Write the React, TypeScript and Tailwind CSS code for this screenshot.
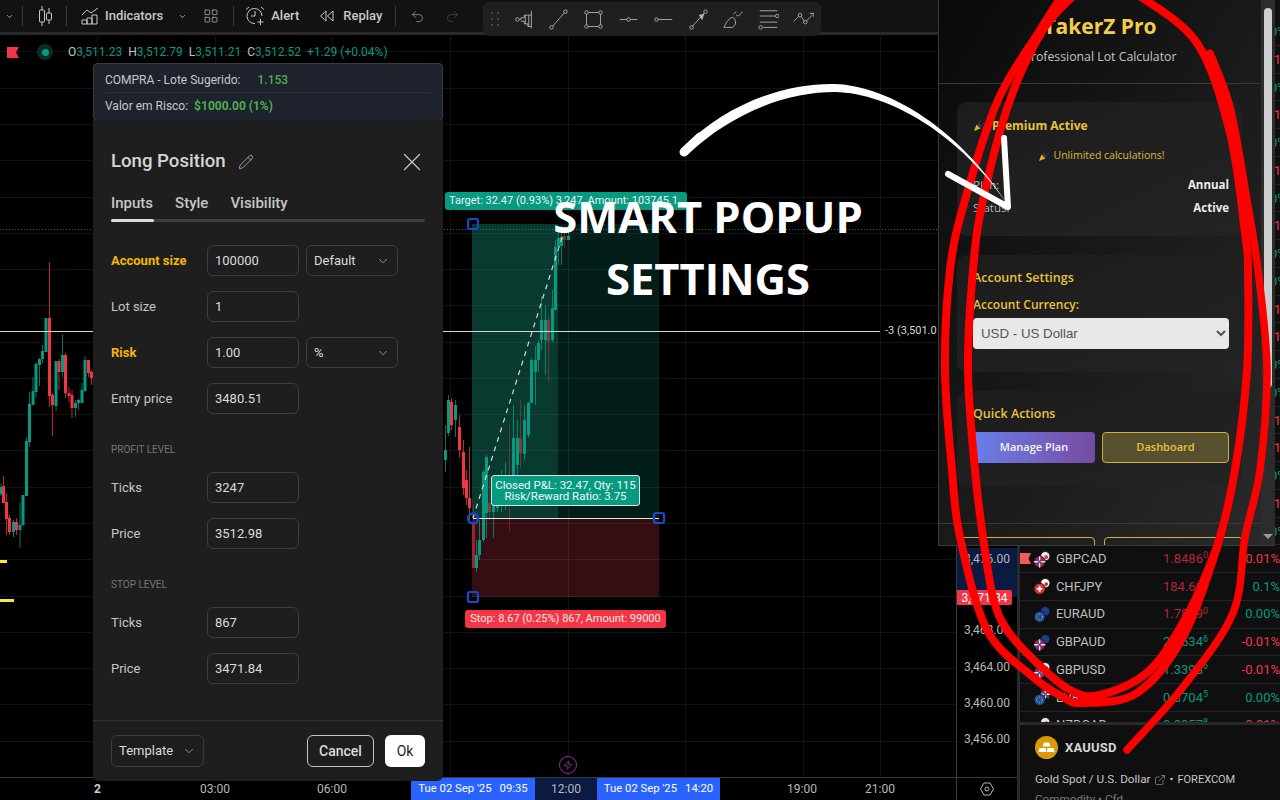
import React from 'react';
import { ChevronDown, Pencil, X, Undo2, Redo2, LayoutGrid, ExternalLink, Zap } from 'lucide-react';

// [x, wickTop, bodyTop, bodyBottom, wickBottom, up?]
type Candle = [number, number, number, number, number, number];
const candles: Candle[] = [
  [0.5, 484, 487, 494, 496, 1], [3, 476, 486, 503, 503, 0], [6, 493, 502, 519, 535, 0], [9, 515, 518, 532, 535, 0],
  [13, 520, 522, 532, 537, 1], [16, 518, 522, 530, 535, 0], [19.5, 503, 525, 530, 548, 1], [22.5, 495, 495, 525, 526, 1],
  [26, 437, 441, 496, 496, 1], [29, 392, 404, 442, 447, 1], [32.5, 377, 391, 405, 405, 1], [35.5, 362, 364, 392, 398, 1],
  [39, 358, 359, 365, 386, 1], [42, 345, 351, 359, 363, 1], [45.5, 318, 318, 352, 352, 1], [49, 262, 318, 396, 407, 0],
  [52, 393, 395, 405, 436, 0], [55.5, 361, 361, 406, 411, 1], [58.5, 359, 361, 372, 390, 0], [62, 334, 355, 372, 377, 1],
  [65, 353, 355, 393, 398, 0], [68.5, 387, 393, 396, 402, 0], [71.5, 390, 395, 408, 418, 0], [75, 400, 403, 408, 417, 1],
  [78, 399, 400, 403, 410, 1], [81.5, 383, 390, 403, 403, 1], [84.5, 356, 360, 391, 392, 1], [88, 360, 360, 373, 377, 0],
  [91, 370, 372, 378, 385, 0],
  [445, 425, 450, 460, 472, 1], [448, 395, 400, 433, 436, 1], [451, 398, 402, 425, 430, 0], [455, 400, 405, 420, 437, 1],
  [459, 415, 427, 450, 458, 0], [463, 440, 452, 488, 495, 0], [466, 470, 480, 498, 505, 0], [469, 447, 498, 508, 520, 0],
  [473, 505, 523, 568, 568, 0], [476, 540, 555, 568, 572, 1], [479, 520, 540, 555, 560, 1], [483, 470, 472, 540, 542, 1],
  [486, 455, 457, 513, 538, 1], [489, 475, 503, 512, 520, 0], [493, 485, 490, 512, 538, 1], [497, 478, 482, 508, 512, 1],
  [501, 470, 480, 505, 512, 1], [505, 462, 478, 505, 510, 1], [509, 425, 478, 500, 531, 0], [513, 405, 438, 478, 490, 1],
  [517, 420, 438, 465, 475, 1], [520, 400, 438, 453, 468, 0], [524, 405, 420, 454, 460, 1], [528, 402, 403, 435, 438, 1],
  [531, 358, 360, 403, 403, 1], [535, 346, 360, 372, 405, 1], [538, 340, 343, 360, 372, 1], [541, 296, 320, 340, 351, 1],
  [545, 305, 320, 340, 375, 1], [548, 315, 320, 341, 381, 0], [552, 290, 308, 340, 342, 1], [555, 240, 247, 310, 310, 1],
  [558, 228, 238, 247, 265, 1], [561, 226, 237, 246, 265, 1], [564, 226, 236, 240, 248, 0], [568, 224, 236, 240, 240, 1],
];

const gridY = [51, 88, 124, 160, 197, 233, 269, 305, 342, 378, 414, 450, 487, 523, 559, 596, 632, 668, 704, 741];
const gridX = [97, 215, 332, 450, 568, 685, 803, 880];

const inkRed = '#f23645';
const inkGreen = '#089981';

// smooth line through the points, for the hand drawn marks
function smooth(pts: number[][]) {
  let d = `M${pts[0][0]},${pts[0][1]}`;
  for (let i = 0; i < pts.length - 1; i++) {
    const p0 = pts[i - 1] || pts[i];
    const p1 = pts[i];
    const p2 = pts[i + 1];
    const p3 = pts[i + 2] || p2;
    const c1x = p1[0] + (p2[0] - p0[0]) / 6;
    const c1y = p1[1] + (p2[1] - p0[1]) / 6;
    const c2x = p2[0] - (p3[0] - p1[0]) / 6;
    const c2y = p2[1] - (p3[1] - p1[1]) / 6;
    d += ` C${c1x},${c1y} ${c2x},${c2y} ${p2[0]},${p2[1]}`;
  }
  return d;
}

const loopOuter = [[1063, -6], [1040, 30], [998, 100], [965, 200], [950, 270], [945, 370], [952, 470], [960, 537], [987, 630], [1033, 677], [1063, 697], [1083, 703], [1137, 693], [1183, 637], [1217, 547], [1235, 470], [1247, 370], [1248, 270], [1245, 233], [1230, 133], [1197, 43], [1137, -6]];
const loopInner = [[1075, -6], [1043, 30], [1010, 100], [983, 200], [973, 270], [968, 370], [975, 470], [983, 537], [993, 597], [1007, 630], [1037, 663], [1070, 690], [1100, 695], [1150, 670], [1190, 610], [1217, 547]];
const loopTail = [[1210, 53], [1230, 107], [1247, 200], [1258, 270], [1267, 370], [1260, 470], [1245, 537], [1233, 613], [1183, 687], [1127, 750]];

const ChartCanvas = () => (
  <svg className="absolute left-0 top-0" width="956" height="777" viewBox="0 0 956 777">
    <rect x="472" y="224" width="86" height="294" fill="#083a30" />
    <rect x="558" y="224" width="101" height="294" fill="#031d18" />
    <rect x="472" y="518" width="187" height="79" fill="#340e12" />
    {gridY.map((y) => <line key={y} x1="0" x2="956" y1={y + 0.5} y2={y + 0.5} stroke="#ffffff" strokeOpacity="0.07" />)}
    {gridX.map((x) => <line key={x} y1="36" y2="777" x1={x + 0.5} x2={x + 0.5} stroke="#ffffff" strokeOpacity="0.07" />)}
    <line x1="0" x2="938" y1="229.5" y2="229.5" stroke="#089981" strokeDasharray="1 2" opacity="0.8" />
    {candles.map(([x, wt, bt, bb, wb, up], i) => {
      const color = up ? inkGreen : inkRed;
      const faded = x > 472 && !up ? 0.55 : 1;
      return (
        <g key={i} opacity={faded}>
          <rect x={x} y={wt} width="1" height={wb - wt} fill={color} opacity="0.75" />
          <rect x={x - 1} y={bt} width="3" height={bb - bt} fill={color} />
        </g>
      );
    })}
    <rect x="0" y="560" width="7" height="3" fill="#f5e642" />
    <rect x="0" y="599" width="14" height="3" fill="#f5e642" />
    <line x1="0" x2="880" y1="331.5" y2="331.5" stroke="#d6d6d6" />
    <line x1="473" y1="518" x2="566" y2="225" stroke="#d8d8d8" strokeWidth="1.2" strokeDasharray="5 5" />
    <line x1="473" x2="659" y1="518.5" y2="518.5" stroke="#e8e8e8" />
    <rect x="468" y="219" width="10" height="10" rx="2" fill="none" stroke="#1848cc" strokeWidth="2.2" />
    <rect x="468" y="592" width="10" height="10" rx="2" fill="none" stroke="#1848cc" strokeWidth="2.2" />
    <rect x="654" y="513" width="10" height="10" rx="2" fill="none" stroke="#1848cc" strokeWidth="2.2" />
    <circle cx="473" cy="518.5" r="5" fill="none" stroke="#1848cc" strokeWidth="2.4" />
  </svg>
);

const CandleIcon = () => (
  <svg width="18" height="22" viewBox="0 0 18 22" fill="none" stroke="#c8c8c8" strokeWidth="1">
    <path d="M6 1v4M6 17v4M13 3v5M13 15v4" />
    <rect x="3.5" y="5" width="5" height="12" rx="1" />
    <rect x="10.5" y="8" width="5" height="7" rx="1" />
  </svg>
);

const IndicatorsIcon = () => (
  <svg width="18" height="18" viewBox="0 0 18 18" fill="none" stroke="#c8c8c8" strokeWidth="1">
    <path d="M1 8 6 3l4 3 7-5M1 17v-4h5v4M6 17v-6h5v6M11 17V8h5v9M1 17h15" />
  </svg>
);

const AlertIcon = () => (
  <svg width="20" height="20" viewBox="0 0 20 20" fill="none" stroke="#c8c8c8" strokeWidth="1">
    <path d="M17 10a7.5 7.5 0 1 0-7 7.5M10 5v5H6M1 3.5 4 1M19 3.5 16 1M15.5 13v6M12.5 16h6" />
  </svg>
);

const ReplayIcon = () => (
  <svg width="16" height="12" viewBox="0 0 16 12" fill="none" stroke="#c8c8c8" strokeWidth="1">
    <path d="M7 1 1.5 6 7 11zM14 1 8.5 6 14 11z" />
  </svg>
);

const Dot = ({ x, y }: { x: number; y: number }) => <circle cx={x} cy={y} r="2" fill="#1f1f1f" stroke="#b4b4b4" />;

// floating drawing toolbar icons, each one 24x24
const toolIcons = [
  <g key="volume" fill="none" stroke="#b4b4b4"><path d="M21 2v20M7 12h2V10h4V7h8M9 14h4v3h4v3h4M14 7v10M18 7v13" /><Dot x={5} y={12} /></g>,
  <g key="trend" fill="none" stroke="#b4b4b4"><path d="M5 20 19 4" /><Dot x={4} y={21} /><Dot x={20} y={3} /></g>,
  <g key="rect" fill="none" stroke="#b4b4b4"><path d="M4 4h16v16H4z" /><Dot x={4} y={4} /><Dot x={20} y={4} /><Dot x={4} y={20} /><Dot x={20} y={20} /></g>,
  <g key="hline" fill="none" stroke="#b4b4b4"><path d="M2 12h20" /><Dot x={12} y={12} /></g>,
  <g key="ray" fill="none" stroke="#b4b4b4"><path d="M4 12h18" /><Dot x={4} y={12} /></g>,
  <g key="arrow" fill="none" stroke="#b4b4b4"><path d="M5 20 19 4" /><path d="M13 7l5-1-2 6z" fill="#b4b4b4" /><Dot x={4} y={21} /><Dot x={20} y={3} /></g>,
  <g key="brush" fill="none" stroke="#b4b4b4"><path d="M1 21h10c4-3 4-7 2-10-1-2-3-2-5 0-3 2-5 6-7 10zM15 7c2 2 5 0 7-4M12 6l3-3" /></g>,
  <g key="fib" fill="none" stroke="#b4b4b4"><path d="M2 2h20M2 8h18M2 15h20M6 21h16" /><Dot x={22} y={8} /><Dot x={3} y={21} /></g>,
  <g key="path" fill="none" stroke="#b4b4b4"><path d="M1 14 8 7l6 8 9-9M19 5h5v5" /><Dot x={8} y={7} /><Dot x={14} y={15} /></g>,
];

const TopBar = () => (
  <div className="flex h-[32px] items-center bg-[#121212] text-[13px] font-medium text-[#c8c8c8]">
    <ChevronDown className="ml-[5px] h-[9px] w-[9px]" strokeWidth={2} />
    <div className="ml-[8px] h-[20px] w-px bg-[#3a3a3a]" />
    <div className="ml-[13px]"><CandleIcon /></div>
    <div className="ml-[12px] h-[20px] w-px bg-[#3a3a3a]" />
    <div className="ml-[14px]"><IndicatorsIcon /></div>
    <span className="ml-[6px]">Indicators</span>
    <ChevronDown className="ml-[15px] h-[9px] w-[9px]" strokeWidth={2} />
    <LayoutGrid className="ml-[16px] h-[16px] w-[16px]" strokeWidth={1} />
    <div className="ml-[14px] h-[20px] w-px bg-[#3a3a3a]" />
    <div className="ml-[11px]"><AlertIcon /></div>
    <span className="ml-[6px]">Alert</span>
    <div className="ml-[20px]"><ReplayIcon /></div>
    <span className="ml-[8px]">Replay</span>
    <div className="ml-[13px] h-[20px] w-px bg-[#3a3a3a]" />
    <Undo2 className="ml-[14px] h-[15px] w-[15px] text-[#9a9a9a]" strokeWidth={1.2} />
    <Redo2 className="ml-[20px] h-[15px] w-[15px] text-[#4a4a4a]" strokeWidth={1.2} />
  </div>
);

const DrawingBar = () => (
  <div className="absolute left-[483px] top-[2px] flex h-[34px] w-[338px] items-center rounded-md bg-[#1f1f1f] pl-[8px]">
    <div className="mr-[14px] grid grid-cols-2 gap-x-[4px] gap-y-[4px]">
      {[0, 1, 2, 3, 4, 5].map((i) => <span key={i} className="h-[2px] w-[2px] rounded-full bg-[#555]" />)}
    </div>
    <div className="flex gap-[14px]">
      {toolIcons.map((icon, i) => (
        <svg key={i} width="21" height="21" viewBox="0 0 24 24">{icon}</svg>
      ))}
    </div>
  </div>
);

const LegendValue = ({ k, v }: { k: string; v: string }) => (
  <span className="mr-[6px]"><span className="text-[#c4c4c4]">{k}</span><span className="text-[#089981]">{v}</span></span>
);

const Legend = () => (
  <div className="absolute left-0 top-[42px] flex h-[20px] items-center text-[12px]">
    <svg className="ml-[7px]" width="12" height="11" viewBox="0 0 12 11"><path d="M0 0h12l-3 5.5 3 5.5H0z" fill={inkRed} /></svg>
    <span className="ml-[18px] flex h-[16px] w-[16px] items-center justify-center rounded-full bg-[#0e2b26]">
      <span className="h-[7px] w-[7px] rounded-full bg-[#089981]" />
    </span>
    <span className="ml-[15px] flex">
      <LegendValue k="O" v="3,511.23" />
      <LegendValue k="H" v="3,512.79" />
      <LegendValue k="L" v="3,511.21" />
      <LegendValue k="C" v="3,512.52" />
      <span className="text-[#089981]">+1.29 (+0.04%)</span>
    </span>
  </div>
);

const inputBox = 'flex h-[31px] items-center rounded-md border border-[#3d3d3d] px-[7px] text-[13px] text-[#dbdbdb]';

const InputRow = ({ label, value, unit, accent }: { label: string; value: string; unit?: string; accent?: boolean }) => (
  <div className="flex items-center">
    <span className={`w-[96px] text-[13px] ${accent ? 'font-bold text-[#f5b800]' : 'text-[#c6c6c6]'}`}>{label}</span>
    <div className={`${inputBox} w-[92px]`}>{value}</div>
    {unit && (
      <div className={`${inputBox} ml-[7px] w-[92px] justify-between`}>
        {unit}
        <ChevronDown className="h-[14px] w-[14px] text-[#a0a0a0]" strokeWidth={1.5} />
      </div>
    )}
  </div>
);

const SettingsDialog = () => (
  <div className="absolute left-[93px] top-[120px] flex h-[661px] w-[350px] flex-col rounded-b-md bg-[#1e1e1e] font-['Roboto',sans-serif]">
    <div className="mt-[30px] flex h-[24px] items-center justify-between pl-[18px] pr-[16px]">
      <div className="flex items-center">
        <span className="text-[18.6px] font-medium text-[#d6d6d6]">Long Position</span>
        <Pencil className="ml-[12px] h-[16px] w-[16px] text-[#bdbdbd]" strokeWidth={1.2} />
      </div>
      <X className="h-[30px] w-[30px] text-[#c4c4c4]" strokeWidth={1} />
    </div>
    <div className="mt-[20px] flex h-[18px] items-center gap-[22px] pl-[18px] text-[15px] font-medium text-[#c6c6c6]">
      <span>Inputs</span>
      <span>Style</span>
      <span>Visibility</span>
    </div>
    <div className="ml-[18px] mr-[18px] mt-[7px] h-[3px] rounded-full bg-[#3d3d3d]">
      <div className="h-[3px] w-[43px] rounded-full bg-[#dbdbdb]" />
    </div>
    <div className="mt-[23px] flex flex-col gap-[15px] pl-[18px]">
      <InputRow label="Account size" value="100000" unit="Default" accent />
      <InputRow label="Lot size" value="1" />
      <InputRow label="Risk" value="1.00" unit="%" accent />
      <InputRow label="Entry price" value="3480.51" />
    </div>
    <div className="ml-[18px] mt-[29px] h-[14px] text-[10px] leading-[14px] text-[#757575]">PROFIT LEVEL</div>
    <div className="mt-[15px] flex flex-col gap-[15px] pl-[18px]">
      <InputRow label="Ticks" value="3247" />
      <InputRow label="Price" value="3512.98" />
    </div>
    <div className="ml-[18px] mt-[29px] h-[14px] text-[10px] leading-[14px] text-[#757575]">STOP LEVEL</div>
    <div className="mt-[15px] flex flex-col gap-[15px] pl-[18px]">
      <InputRow label="Ticks" value="867" />
      <InputRow label="Price" value="3471.84" />
    </div>
    <div className="mt-auto flex h-[61px] items-start justify-between border-t border-[#333] px-[18px] pt-[14px]">
      <div className={`${inputBox} h-[32px] w-[93px] justify-between`}>
        Template
        <ChevronDown className="h-[14px] w-[14px] text-[#a0a0a0]" strokeWidth={1.5} />
      </div>
      <div className="flex gap-[11px]">
        <div className="flex h-[32px] w-[67px] items-center justify-center rounded-md border border-[#c4c4c4] text-[14px] font-medium text-[#dbdbdb]">Cancel</div>
        <div className="flex h-[32px] w-[40px] items-center justify-center rounded-md bg-white text-[14px] text-[#1e1e1e]">Ok</div>
      </div>
    </div>
  </div>
);

const LotTooltip = () => (
  <div className="absolute left-[93px] top-[63px] h-[58px] w-[350px] rounded-[4px] border border-[#363a45] bg-[#1e222d] px-[11px] font-['Roboto',sans-serif] text-[12px] text-[#c8c8c8]">
    <div className="flex h-[29px] items-center border-b border-[#2c303a] pt-[3px]">
      <span>COMPRA - Lote Sugerido:</span>
      <span className="ml-[17px] font-medium text-[#4caf50]">1.153</span>
    </div>
    <div className="flex h-[26px] items-center">
      <span>Valor em Risco:</span>
      <span className="ml-[6px] font-bold text-[#4caf50]">$1000.00 (1%)</span>
    </div>
  </div>
);

const ChartLabels = () => (
  <>
    <div className="absolute left-[445px] top-[192px] flex h-[18px] w-[242px] items-center overflow-hidden whitespace-nowrap rounded-[3px] bg-[#089981] pl-[4px] text-[11px] text-[#e8f5f2]">
      Target: 32.47 (0.93%) 3,247, Amount: 103745.1
    </div>
    <div className="absolute left-[491px] top-[475px] flex h-[31px] w-[149px] flex-col items-center justify-center rounded-[3px] border border-[#cfe8e2] bg-[#089981] text-[11.5px] leading-[11px] text-[#f0faf8]">
      <span>Closed P&amp;L: 32.47, Qty: 115</span>
      <span>Risk/Reward Ratio: 3.75</span>
    </div>
    <div className="absolute left-[465px] top-[610px] flex h-[18px] w-[201px] items-center justify-center whitespace-nowrap rounded-[3px] bg-[#f23645] text-[11px] text-[#ffe8ea]">
      Stop: 8.67 (0.25%) 867, Amount: 99000
    </div>
    <div className="absolute left-[885px] top-[323px] whitespace-nowrap text-[11px] text-[#d6d6d6]">-3 (3,501.0</div>
    <div className="absolute left-[559px] top-[756px] flex h-[18px] w-[18px] items-center justify-center rounded-full border border-[#9c27b0] bg-black">
      <Zap className="h-[10px] w-[10px] text-[#b04ac0]" strokeWidth={1.6} />
    </div>
  </>
);

const TimeAxis = () => (
  <div className="flex h-[23px] border-t border-[#3a3a3a] text-[12px] leading-[24px] text-[#b8b8b8]">
    <span className="ml-[94px] flex w-[8px] items-center font-bold text-[#d0d0d0]">2</span>
    <span className="ml-[97px] flex w-[32px] items-center justify-center">03:00</span>
    <span className="ml-[85px] flex w-[32px] items-center justify-center">06:00</span>
    <span className="ml-[63px] flex w-[124px] items-center justify-center gap-[8px] whitespace-nowrap bg-[#2962ff] text-[11.3px] text-white"><span>Tue 02 Sep '25</span><span>09:35</span></span>
    <span className="flex w-[62px] items-center justify-center bg-[#0b1a40]">12:00</span>
    <span className="flex w-[123px] items-center justify-center gap-[8px] whitespace-nowrap bg-[#2962ff] text-[11.3px] text-white"><span>Tue 02 Sep '25</span><span>14:20</span></span>
    <span className="ml-[66px] flex w-[32px] items-center justify-center">19:00</span>
    <span className="ml-[46px] flex w-[32px] items-center justify-center">21:00</span>
  </div>
);

const axisTicks = [
  { v: '3,476.00', mt: 'mt-[552px]' },
  { v: '3,468.00', mt: 'mt-[57px]' },
  { v: '3,464.00', mt: 'mt-[23px]' },
  { v: '3,460.00', mt: 'mt-[22px]' },
  { v: '3,456.00', mt: 'mt-[22px]' },
];

const PriceAxis = () => (
  <div className="relative flex h-[800px] w-[61px] shrink-0 flex-col border-l border-[#3a3a3a] bg-black text-[12px] text-[#b8b8b8]">
    <div className="absolute left-0 top-[548px] h-[49px] w-[60px] bg-[#0b1a40]" />
    <div className="relative h-[777px] pl-[7px]">
      {axisTicks.map((t) => <div key={t.v} className={`${t.mt} h-[14px] leading-[14px]`}>{t.v}</div>)}
    </div>
    <div className="absolute left-0 top-[590px] flex h-[15px] w-[55px] items-center justify-center rounded-r-[2px] bg-[#f23645] text-white">3,471.84</div>
    <div className="flex h-[23px] items-center justify-center border-t border-[#3a3a3a]">
      <svg width="14" height="14" viewBox="0 0 14 14" fill="none" stroke="#b8b8b8"><path d="M4 1h6l3.5 6-3.5 6H4L.5 7z" /><circle cx="7" cy="7" r="2" /></svg>
    </div>
  </div>
);

const flagColors: Record<string, string[]> = {
  GB: ['#c8102e', '#e8e8f0', '#39509f'],
  CA: ['#e8e8e8', '#e03030', '#e03030'],
  CH: ['#e03030', '#ffffff', '#e03030'],
  JP: ['#ffffff', '#f0f0f0', '#d03030'],
  EU: ['#1e4fa5', '#1e4fa5', '#e8c53a'],
  AU: ['#1d3f8a', '#c8102e', '#1d3f8a'],
  US: ['#e8e8f0', '#c8102e', '#1d4f9a'],
  NZ: ['#1d3f8a', '#c8102e', '#1d3f8a'],
};

const Flag = ({ code, cx, cy, r }: { code: string; cx: number; cy: number; r: number }) => {
  const [a, b, c] = flagColors[code];
  return (
    <g>
      <circle cx={cx} cy={cy} r={r} fill={a} stroke="#0f0f0f" strokeWidth="1" />
      {code === 'CH' && <path d={`M${cx - 3},${cy}h6M${cx},${cy - 3}v6`} stroke={b} strokeWidth="2" />}
      {code === 'GB' && <path d={`M${cx - r},${cy}h${2 * r}M${cx},${cy - r}v${2 * r}`} stroke={b} strokeWidth="1.5" />}
      {code === 'GB' && <path d={`M${cx - 4},${cy - 4}L${cx + 4},${cy + 4}M${cx + 4},${cy - 4}L${cx - 4},${cy + 4}`} stroke={c} strokeWidth="1.5" />}
      {code === 'EU' && <circle cx={cx} cy={cy} r={r - 3} fill="none" stroke={c} strokeWidth="1" strokeDasharray="1 1.2" />}
      {(code === 'AU' || code === 'US' || code === 'CA' || code === 'JP' || code === 'NZ') && <circle cx={cx + 1} cy={cy + 1} r={r - 3} fill={c} />}
    </g>
  );
};

const PairIcon = ({ a, b }: { a: string; b: string }) => (
  <svg width="18" height="18" viewBox="0 0 18 18">
    <Flag code={b} cx={12} cy={6} r={5} />
    <Flag code={a} cx={6} cy={12} r={6} />
  </svg>
);

// rows that lie behind the popup: only the end of their change column is seen
const hiddenChanges = [1, 0, 1, 0, 1, 0, 1, 0, 1, 1, 0, 0, 1, 1, 0, 0, 1, 0, 1];

const pairs = [
  ['GBPCAD', 'GB', 'CA', '1.8486', '0', 0, '-0.01%', 0],
  ['CHFJPY', 'CH', 'JP', '184.60', '8', 0, '0.1%', 1],
  ['EURAUD', 'EU', 'AU', '1.7879', '0', 0, '0.00%', 1],
  ['GBPAUD', 'GB', 'AU', '2.0534', '6', 1, '-0.01%', 0],
  ['GBPUSD', 'GB', 'US', '1.3398', '6', 1, '-0.01%', 0],
  ['EURGBP', 'EU', 'GB', '0.8704', '5', 1, '0.00%', 1],
  ['NZDCAD', 'NZ', 'CA', '0.8057', '8', 1, '-0.01%', 0],
] as const;

const Watchlist = () => (
  <div className="flex h-[800px] w-[260px] shrink-0 flex-col bg-[#0f0f0f]">
    <div className="h-[722px] shrink-0 overflow-hidden pt-[18px]">
      {hiddenChanges.map((up, i) => (
        <div key={i} className="h-[27.75px] border-b border-[#242424] pl-[232px] text-[13px] leading-[27px]">
          <span className={`block w-[28px] overflow-hidden whitespace-nowrap ${up ? 'text-[#089981]' : 'text-[#f23645]'}`}>{up ? '0.00%' : '-0.01%'}</span>
        </div>
      ))}
      {pairs.map(([name, a, b, price, last, up, chg, chgUp]) => (
        <div key={name} className="relative flex h-[27.75px] items-center border-b border-[#242424] pl-[14px] text-[13px]">
          {name === 'GBPCAD' && (
            <svg className="absolute left-0 top-[8px]" width="11" height="11" viewBox="0 0 11 11"><path d="M0 0h11L8.5 5.5 11 11H0z" fill="#f75a5a" /></svg>
          )}
          <PairIcon a={a} b={b} />
          <span className="ml-[5px] w-[100px] text-[#bdbdbd]">{name}</span>
          <span className={`w-[62px] text-right ${up ? 'text-[#089981]' : 'text-[#b22833]'}`}>
            {price}<sup className="text-[9px]">{last}</sup>
          </span>
          <span className={`w-[72px] shrink-0 whitespace-nowrap text-right ${chgUp ? 'text-[#089981]' : 'text-[#f23645]'}`}>{chg}</span>
        </div>
      ))}
    </div>
    <div className="h-[3px] shrink-0 bg-[#2a2a2a]" />
    <div className="overflow-hidden pl-[15px]">
      <div className="mt-[11px] flex items-center">
        <svg width="23" height="23" viewBox="0 0 23 23">
          <circle cx="11.5" cy="11.5" r="11.5" fill="#d89b06" />
          <path d="M9 6.5h5l1.5 4h-8zM4.5 12h6l1 4H3.5zM12.5 12h6l1 4h-8z" fill="#fff" />
        </svg>
        <span className="ml-[7px] text-[13px] font-bold tracking-[0.2px] text-[#d6d6d6]">XAUUSD</span>
      </div>
      <div className="mt-[12px] flex items-center whitespace-nowrap text-[11.7px] text-[#c6c6c6]">
        Gold Spot / U.S. Dollar
        <ExternalLink className="ml-[3px] h-[12px] w-[12px]" strokeWidth={1} />
        <span className="ml-[4px]">•</span>
        <span className="ml-[4px] text-[11px]">FOREXCOM</span>
      </div>
      <div className="mt-[2px] whitespace-nowrap text-[11.7px] text-[#7a7a7a]">Commodity • Cfd</div>
    </div>
  </div>
);

const Popper = () => (
  <svg width="11" height="11" viewBox="0 0 11 11">
    <path d="M1 10 3.5 3.5 7.5 7.5z" fill="#e8b020" />
    <path d="M4 4 6 2 9 5 7.5 7.5z" fill="#2a3a50" />
    <path d="M6 1.5 7 .5M9.5 3l1-.5" stroke="#c03030" />
  </svg>
);

const cardCls = 'ml-[18px] mr-[19px] rounded-[10px] bg-gradient-to-br from-[#1c1c1c] to-[#232323] pl-[16px] pr-[13px]';

const ProPopup = () => (
  <div className="absolute left-[938px] top-0 flex h-[546px] w-[337px] border-b border-l border-[#3a3a3a] bg-gradient-to-br from-[#0a0a0a] to-[#2a2a2a] font-['Open_Sans',sans-serif]">
    <div className="flex min-w-0 flex-1 flex-col">
      <div className="h-[84px] border-b border-[#3a3a3a] pt-[9px] text-center">
        <div className="text-[21px] font-bold leading-[34px] text-[#f4cc4d]">TakerZ Pro</div>
        <div className="mt-[5px] text-[12.3px] leading-[18px] text-[#c4c4c4]">Professional Lot Calculator</div>
      </div>
      <div className={`${cardCls} mt-[18px] h-[134px]`}>
        <div className="mt-[15px] flex h-[18px] items-center">
          <Popper />
          <span className="ml-[8px] text-[12px] font-bold text-[#e8c23f]">Premium Active</span>
        </div>
        <div className="mt-[12px] flex h-[18px] items-center justify-center gap-[5px] text-[10.5px] text-[#dcb83f]">
          <Popper />Unlimited calculations!
        </div>
        <div className="mt-[11px] flex h-[18px] items-center justify-between text-[11.5px]">
          <span className="text-[#b4b4b4]">Plan:</span><span className="font-bold text-[#ececec]">Annual</span>
        </div>
        <div className="mt-[5px] flex h-[18px] items-center justify-between text-[11.5px]">
          <span className="text-[#b4b4b4]">Status:</span><span className="font-bold text-[#ececec]">Active</span>
        </div>
      </div>
      <div className={`${cardCls} mt-[19px] h-[117px]`}>
        <div className="mt-[14px] text-[12.5px] font-semibold leading-[18px] text-[#e8c23f]">Account Settings</div>
        <div className="mt-[9px] text-[12px] font-semibold leading-[18px] text-[#e8c23f]">Account Currency:</div>
        <select className="mt-[4px] h-[31px] w-full rounded-[4px] bg-[#e8e8e8] pl-[4px] font-['Liberation_Sans',sans-serif] text-[13.3px] text-[#555]" defaultValue="USD">
          <option value="USD">USD - US Dollar</option>
        </select>
      </div>
      <div className={`${cardCls} mt-[19px] h-[95px]`}>
        <div className="mt-[14px] text-[12.5px] font-semibold leading-[18px] text-[#e8c23f]">Quick Actions</div>
        <div className="mt-[9px] flex gap-[7px]">
          <div className="flex h-[31px] w-[122px] items-center justify-center rounded-[4px] bg-gradient-to-r from-[#667eea] to-[#764ba2] text-[11px] font-semibold text-[#f4f4f4]">Manage Plan</div>
          <div className="flex h-[31px] w-[127px] items-center justify-center rounded-[4px] border border-[#d4af37] bg-[#57502e] text-[11px] font-semibold text-[#e6c23f]">Dashboard</div>
        </div>
      </div>
      <div className="mt-[37px] flex flex-1 gap-[9px] overflow-hidden border-t border-[#3a3a3a] pl-[21px] pt-[13px]">
        <div className="h-[20px] w-[135px] rounded-t-[4px] border border-[#d4af37]" />
        <div className="h-[20px] w-[139px] rounded-t-[4px] border border-[#d4af37]" />
      </div>
    </div>
    <div className="flex w-[14px] shrink-0 flex-col items-center bg-[#2c2c2c]">
      <div className="mt-[8px] h-[380px] w-[8px] rounded-full bg-[#cfcfcf]" />
      <div className="mb-[6px] mt-auto h-0 w-0 border-l-[5px] border-r-[5px] border-t-[5px] border-l-transparent border-r-transparent border-t-[#9a9a9a]" />
    </div>
  </div>
);

const Marks = () => (
  <svg className="pointer-events-none absolute left-0 top-0" width="1280" height="800" viewBox="0 0 1280 800" fill="none" strokeLinecap="round" strokeLinejoin="round">
    <path d={smooth(loopOuter)} stroke="#ff0000" strokeWidth="8" />
    <path d={smooth(loopInner)} stroke="#ff0000" strokeWidth="8" />
    <path d={smooth(loopTail)} stroke="#ff0000" strokeWidth="7.5" />
    <path d="M681,149 C730,100 790,83 835,84 C890,86 960,130 1008,205 C960,135 890,93 835,92 C790,92 735,110 687,155 Z" fill="#fff" />
    <path d="M684,152 L700,137" stroke="#fff" strokeWidth="9" />
    <path d="M948,174 L1008,207 L1004,138" stroke="#fff" strokeWidth="6" />
  </svg>
);

export default function App() {
  return (
    <div className="relative flex h-[800px] w-[1280px] overflow-hidden bg-black font-['Roboto',sans-serif]">
      <div className="flex w-[956px] shrink-0 flex-col">
        <TopBar />
        <div className="h-[3px] bg-[#2a2a2a]" />
        <div className="flex-1" />
        <TimeAxis />
      </div>
      <PriceAxis />
      <div className="h-[800px] w-[3px] shrink-0 bg-[#2a2a2a]" />
      <Watchlist />

      <ChartCanvas />
      <DrawingBar />
      <Legend />
      <ChartLabels />
      <LotTooltip />
      <SettingsDialog />
      <ProPopup />

      <div className="absolute left-[454px] top-[186px] w-[508px] text-center font-['Open_Sans',sans-serif] text-[43.5px] font-bold leading-[62px] text-white">
        SMART POPUP<br />SETTINGS
      </div>
      <Marks />
    </div>
  );
}
